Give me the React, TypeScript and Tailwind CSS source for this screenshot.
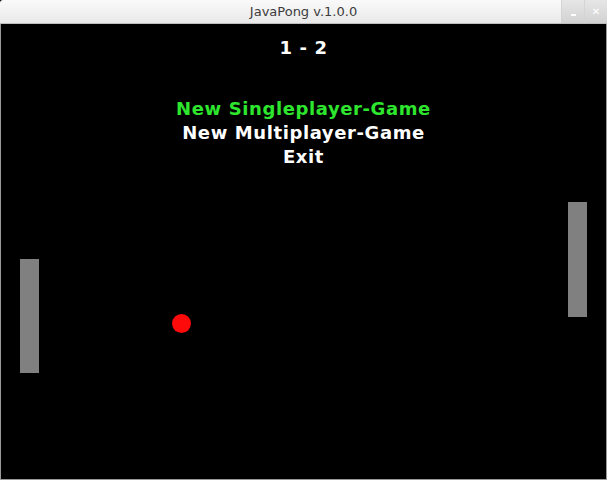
export default function App() {
  const font = { fontFamily: '"DejaVu Sans", Verdana, sans-serif' };

  return (
    <div className="flex h-[480px] w-[607px] flex-col overflow-hidden bg-black" style={font}>
      {/* window title bar */}
      <div className="relative flex h-[24px] items-center justify-center rounded-t-[3px] border-b border-[#bdbdbd] bg-gradient-to-b from-[#fafafa] to-[#e9e9e9]">
        <span className="text-[13px] text-[#3c3c3c]">JavaPong v.1.0.0</span>
        <div className="absolute right-0 top-0 flex h-[23px]">
          <div className="flex w-[23px] items-end justify-center border-l border-[#d4d4d4] bg-gradient-to-b from-[#e6e6e6] to-[#d2d2d2] pb-[7px]">
            <div className="h-[2px] w-[5px] bg-white" />
          </div>
          <div className="flex w-[23px] items-center justify-center border-l border-[#d4d4d4] bg-gradient-to-b from-[#e6e6e6] to-[#d2d2d2]">
            <span className="text-[10px] font-bold leading-none text-white">✕</span>
          </div>
        </div>
      </div>

      {/* game canvas */}
      <div className="relative flex-1 border-x border-b border-[#9a9a9a] bg-black">
        <div className="flex flex-col items-center pt-[12px] text-[18px] font-bold leading-[24px] tracking-[0.6px] text-white">
          <div>1 - 2</div>
          <div className="mt-[37px] text-[#2ee62e]">New Singleplayer-Game</div>
          <div>New Multiplayer-Game</div>
          <div>Exit</div>
        </div>

        <div className="absolute left-[19px] top-[235px] h-[114px] w-[19px] bg-[#808080]" />
        <div className="absolute left-[567px] top-[178px] h-[115px] w-[19px] bg-[#808080]" />
        <div className="absolute left-[171px] top-[290px] h-[19px] w-[19px] rounded-full bg-[#ff0a0a]" />
      </div>
    </div>
  );
}
